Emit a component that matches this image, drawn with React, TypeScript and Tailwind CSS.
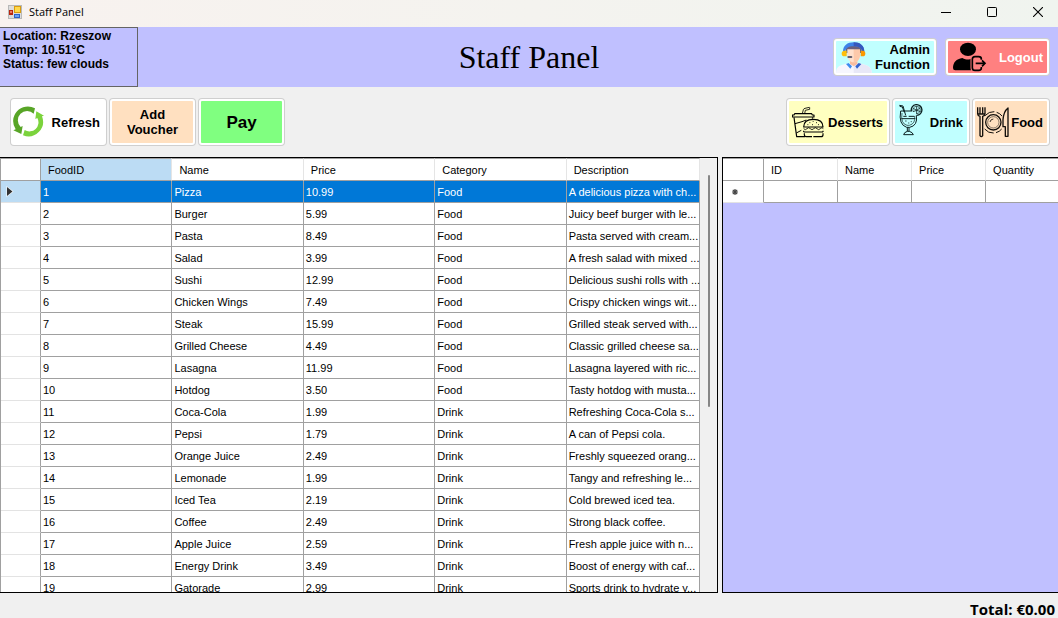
import React from "react";

const FOODS: [string, string, string, string][] = [
  ["Pizza", "10.99", "Food", "A delicious pizza with ch..."],
  ["Burger", "5.99", "Food", "Juicy beef burger with le..."],
  ["Pasta", "8.49", "Food", "Pasta served with cream..."],
  ["Salad", "3.99", "Food", "A fresh salad with mixed ..."],
  ["Sushi", "12.99", "Food", "Delicious sushi rolls with ..."],
  ["Chicken Wings", "7.49", "Food", "Crispy chicken wings wit..."],
  ["Steak", "15.99", "Food", "Grilled steak served with..."],
  ["Grilled Cheese", "4.49", "Food", "Classic grilled cheese sa..."],
  ["Lasagna", "11.99", "Food", "Lasagna layered with ric..."],
  ["Hotdog", "3.50", "Food", "Tasty hotdog with musta..."],
  ["Coca-Cola", "1.99", "Drink", "Refreshing Coca-Cola s..."],
  ["Pepsi", "1.79", "Drink", "A can of Pepsi cola."],
  ["Orange Juice", "2.49", "Drink", "Freshly squeezed orang..."],
  ["Lemonade", "1.99", "Drink", "Tangy and refreshing le..."],
  ["Iced Tea", "2.19", "Drink", "Cold brewed iced tea."],
  ["Coffee", "2.49", "Drink", "Strong black coffee."],
  ["Apple Juice", "2.59", "Drink", "Fresh apple juice with n..."],
  ["Energy Drink", "3.49", "Drink", "Boost of energy with caf..."],
  ["Gatorade", "2.99", "Drink", "Sports drink to hydrate y..."],
];

const FOOD_COLUMNS = ["FoodID", "Name", "Price", "Category", "Description"];
const ORDER_COLUMNS = ["ID", "Name", "Price", "Quantity"];

function AppIcon() {
  return (
    <svg className="h-[14px] w-[14px]" viewBox="0 0 14 14" aria-hidden="true">
      <rect width="14" height="14" fill="#b8b8b8" />
      <rect x="1" y="1" width="12" height="12" fill="#dcdcdc" />
      <rect x="1" y="5" width="4" height="5" fill="#b8260f" />
      <rect x="2" y="6" width="2" height="2" fill="#ef7a5e" />
      <rect x="6" y="1" width="7" height="7" fill="#d99b10" />
      <rect x="7" y="2" width="5" height="5" fill="#ffd84a" />
      <rect x="6" y="9" width="6" height="4" fill="#2d62c8" />
      <rect x="7" y="10" width="4" height="2" fill="#6aa2f4" />
    </svg>
  );
}

function RefreshIcon() {
  return (
    <svg className="h-8 w-8 shrink-0" viewBox="38 316 96 96" aria-hidden="true">
      <path d="M104 323 L100 339 A27 27 0 0 0 61 379 L67 376 L63 400 L39 389 L46 386 A44 44 0 0 1 104 323Z" fill="#58a527" />
      <path d="M68 404 L73 388 A27 27 0 0 0 111 352 L105 355 L108 332 L131 345 L125 347 A44 44 0 0 1 68 404Z" fill="#7bd33c" />
    </svg>
  );
}

function AdminIcon() {
  return (
    <svg className="h-8 w-9 shrink-0" viewBox="48 122 108 96" aria-hidden="true">
      <path d="M48 218 C48 202 55 197 68 193 L86 188 H116 L134 193 C148 197 155 204 155 218Z" fill="#f6f6fe" />
      <path d="M101 188 H116 L134 193 C148 197 155 204 155 218 H101Z" fill="#e8e8f7" />
      <path d="M90 174 H112 V191 L101 198 L90 191Z" fill="#f9bd9f" />
      <path d="M82 143 H120 V164 C120 177 112 186 101 186 S82 177 82 164Z" fill="#ffe0cc" />
      <path d="M101 143 H120 V164 C120 177 112 186 101 186Z" fill="#fdc9aa" />
      <path d="M77 150 C77 141 85 135 101 135 S125 141 125 150 V158 H120 V147 H82 V158 H77Z" fill="#6a5f7c" />
      <path d="M69 154 C69 136 82 126 101 126 S133 136 133 154 H126 C126 144 117 138 101 138 S76 144 76 154Z" fill="#3d82e8" />
      <path d="M101 126 C120 126 133 136 133 154 H126 C126 144 117 138 101 138Z" fill="#3658bd" />
      <path d="M80 151 H73 C67 151 65 155 65 160 S68 168 73 168 H80Z" fill="#ffbe0b" />
      <path d="M122 151 H129 C134 151 136 155 136 160 S133 168 129 168 H122Z" fill="#fb9900" />
      <rect x="82" y="167" width="15" height="6" rx="3" fill="#626070" />
      <path d="M86 188 L96 198 L91 205 L78 191Z" fill="#3c8cf0" />
      <path d="M116 188 L106 198 L111 205 L124 191Z" fill="#3262ce" />
    </svg>
  );
}

function LogoutIcon() {
  return (
    <svg className="h-[30px] w-[35px] shrink-0" viewBox="396 126 105 90" aria-hidden="true">
      <ellipse cx="444" cy="148" rx="24" ry="20" />
      <path d="M399 204 C399 187 409 177 427 174 C440 180 448 180 456 174 V211 H406 Q399 211 399 204Z" />
      <path d="M485 178 V177 Q485 170 476 170 H465 Q457 170 457 178 V203 Q457 211 465 211 H476 Q485 211 485 204 V202" fill="none" stroke="#ff8080" strokeWidth="11" />
      <path d="M484 179 V177 Q484 170 476 170 H465 Q457 170 457 178 V203 Q457 211 465 211 H476 Q484 211 484 204 V201" fill="none" stroke="#000" strokeWidth="5" />
      <path d="M467 190 H495 M486 181 L495 190 L486 199" fill="none" stroke="#000" strokeWidth="5" />
    </svg>
  );
}

function DessertsIcon() {
  return (
    <svg className="h-8 w-8 shrink-0" viewBox="36 47 96 96" fill="none" stroke="#000" strokeWidth="3.5" strokeLinejoin="round" aria-hidden="true">
      <path d="M37 80 V74 H42 L44 70 H95 L97 74 H102 V80Z" />
      <path d="M67 70 L70 58 Q71 55 75 54 L88 51 M74 70 L76 60 L89 57 V51" strokeWidth="2.5" />
      <path d="M42 81 L50 139 H76 M98 81 L97 85" />
      <path d="M45 100 L66 94 L79 89 M49 128 L64 120" strokeWidth="3" />
      <path d="M71 110 C71 95 82 87 100 87 S129 95 129 110Z" />
      <path d="M71 115 Q76 121 81 115 T91 115 T101 115 T111 115 T121 115 T130 115" strokeWidth="2.5" />
      <path d="M71 125 H129 M71 121 V125 M129 121 V125" />
      <path d="M73 129 V134 Q73 139 79 139 H96 M100 139 H123 Q129 139 129 133 V129" />
      <path d="M88 97 H91 M98 93 H101 M108 97 H111 M82 103 H85 M96 103 H99 M114 103 H117" strokeWidth="2.5" />
    </svg>
  );
}

function DrinkIcon() {
  return (
    <svg className="h-8 w-6 shrink-0" viewBox="356 42 72 96" fill="none" stroke="#0b2020" strokeWidth="3" strokeLinejoin="round" aria-hidden="true">
      <path d="M357 46 L368 48 L376 76 M358 49 L366 51 L372 67" />
      <path d="M396 63 H361 Q354 104 379 112 H388 Q413 107 408 76" />
      <path d="M365 69 Q360 101 380 106 H387 Q406 101 403 78" strokeWidth="2" />
      <path d="M363 86 H405 M369 79 H379 M385 79 H402" />
      <path d="M381 112 V124 M386 112 V124 M370 134 Q371 127 381 124 H387 Q397 127 399 134Z" />
      <path d="M393 63 A16 16 0 1 1 409 76" strokeWidth="4" />
      <path d="M398 62 A11 11 0 1 1 409 71" strokeWidth="2" />
      <path d="M409 61 V49 M409 61 L399 55 M409 61 L419 54 M409 61 L421 65 M409 61 V72 M409 61 L398 65" strokeWidth="2.5" />
      <path d="M374 93 H379 M391 95 H395 M383 99 H387" strokeWidth="2" />
    </svg>
  );
}

function FoodIcon() {
  return (
    <svg className="h-8 w-8 shrink-0" viewBox="590 50 96 96" fill="none" stroke="#14100c" strokeWidth="4" strokeLinejoin="round" aria-hidden="true">
      <path d="M592 54 V73 Q592 79 599 81 V139 Q603 145 607 139 V81 Q614 79 614 73 V54" />
      <path d="M599 54 V73 M607 54 V73 M592 74 H614" />
      <circle cx="639" cy="99" r="23" />
      <path d="M629 98 Q630 90 639 89" strokeWidth="2.5" />
      <path d="M614 79 Q626 66 642 67 M649 69 Q659 72 665 80 M613 119 Q624 132 640 131 M647 130 Q658 127 664 119" strokeWidth="3" />
      <circle cx="639" cy="99" r="17" strokeWidth="1.5" />
      <path d="M683 56 V141 H675 V112 H668 V91 Q670 66 683 56Z" />
    </svg>
  );
}

type PanelButtonProps = {
  className: string;
  icon?: React.ReactNode;
  children: React.ReactNode;
};

function PanelButton({ className, icon, children }: PanelButtonProps) {
  return (
    <button
      type="button"
      className={
        "flex items-center rounded-[3px] border-2 border-white text-[13px] leading-[15px] font-bold ring-1 ring-[#cfcfcf] " +
        className
      }
    >
      {icon}
      {children}
    </button>
  );
}

function WindowControls() {
  return (
    <div className="flex gap-[6px]">
      <button type="button" aria-label="Minimize" className="flex h-[23px] w-10 items-center justify-center">
        <svg className="h-[10px] w-[10px]" viewBox="0 0 10 10" aria-hidden="true"><path d="M0 5.5H10" stroke="#000" /></svg>
      </button>
      <button type="button" aria-label="Maximize" className="flex h-[23px] w-10 items-center justify-center">
        <svg className="h-[10px] w-[10px]" viewBox="0 0 10 10" aria-hidden="true"><rect x=".5" y=".5" width="9" height="9" rx=".8" fill="none" stroke="#000" /></svg>
      </button>
      <button type="button" aria-label="Close" className="flex h-[23px] w-10 items-center justify-center">
        <svg className="h-[10px] w-[10px]" viewBox="0 0 10 10" aria-hidden="true"><path d="M0 0L10 10M10 0L0 10" stroke="#000" strokeWidth="1.1" /></svg>
      </button>
    </div>
  );
}

function FoodTable() {
  return (
    <table className="w-full table-fixed border-separate border-spacing-0 border-l border-[#a0a0a0] bg-white text-[11px] leading-[14px]">
      <colgroup>
        <col className="w-10" />
        <col className="w-[18.8%]" />
        <col className="w-[18.8%]" />
        <col className="w-[18.8%]" />
        <col className="w-[18.8%]" />
        <col />
      </colgroup>
      <thead>
        <tr className="h-[23px] text-left">
          <td className="border-t border-r border-b border-[#a0a0a0]" />
          {FOOD_COLUMNS.map((name, i) => (
            <th
              key={name}
              scope="col"
              className={
                "border-t border-r border-b border-t-[#a0a0a0] border-r-[#e5e5e5] border-b-[#a0a0a0] py-0 pr-1 pl-[7px] font-normal " +
                (i === 0 ? "bg-[#bcdcf4]" : "")
              }
            >
              {name}
            </th>
          ))}
        </tr>
      </thead>
      <tbody>
        {FOODS.map((food, row) => (
          <tr key={food[0]} className={row === 0 ? "h-[22px] bg-[#0078d7] text-white" : "h-[22px]"}>
            <td
              className={
                "border-r border-b border-r-[#a0a0a0] border-b-[#e3e3e3] py-0 pr-0 pl-[5px] " +
                (row === 0 ? "bg-[#bcdcf4]" : "")
              }
            >
              {row === 0 && (
                <svg className="h-[11px] w-[8px]" viewBox="0 0 8 11" aria-hidden="true">
                  <path d="M.5 0L7.5 5.5L.5 11Z" fill="#fff" />
                  <path d="M1 1L6.5 5.5L1 10Z" fill="#333" />
                </svg>
              )}
            </td>
            {[String(row + 1), ...food].map((value, i) => (
              <td key={i} className="border-r border-b border-[#a0a0a0] py-0 pr-0 pl-[2px] whitespace-nowrap">
                {value}
              </td>
            ))}
          </tr>
        ))}
      </tbody>
    </table>
  );
}

function OrderTable() {
  return (
    <table className="w-full table-fixed border-separate border-spacing-0 bg-white text-[11px] leading-[14px]">
      <colgroup>
        <col className="w-[41px]" />
        <col className="w-[22.1%]" />
        <col className="w-[22.1%]" />
        <col className="w-[22.1%]" />
        <col />
      </colgroup>
      <thead>
        <tr className="h-[23px] text-left">
          <td className="border-t border-r border-b border-[#a0a0a0]" />
          {ORDER_COLUMNS.map((name) => (
            <th
              key={name}
              scope="col"
              className="border-t border-r border-b border-t-[#a0a0a0] border-r-[#e5e5e5] border-b-[#a0a0a0] py-0 pr-1 pl-[7px] font-normal last:border-r-0"
            >
              {name}
            </th>
          ))}
        </tr>
      </thead>
      <tbody>
        <tr className="h-[22px]">
          <td className="border-r border-b border-r-[#a0a0a0] border-b-[#e3e3e3] py-0 pr-0 pl-[9px]">
            <svg className="h-[6px] w-[6px]" viewBox="0 0 6 6" aria-hidden="true">
              <path d="M3 0V6M0 3H6M.8 .8L5.2 5.2M5.2 .8L.8 5.2" stroke="#444" strokeWidth="1.2" />
            </svg>
          </td>
          {ORDER_COLUMNS.map((name) => (
            <td key={name} className="border-r border-b border-[#a0a0a0] p-0 last:border-r-0" />
          ))}
        </tr>
      </tbody>
    </table>
  );
}

export default function App() {
  return (
    <div className="flex h-screen flex-col bg-[#f0f0f0] font-['Liberation_Sans',Arial,sans-serif] text-black">
      <div className="flex h-[27px] shrink-0 items-start justify-between bg-linear-to-r from-[#f8f2ef] to-[#f0f4ef] pl-2">
        <div className="flex h-6 items-center gap-[7px] font-['Open_Sans','Noto_Sans',sans-serif] text-[11px]">
          <AppIcon />
          <span>Staff Panel</span>
        </div>
        <WindowControls />
      </div>

      <header className="grid h-[60px] shrink-0 grid-cols-[1fr_auto_1fr] items-center bg-[#c0c0ff]">
        <p className="h-full w-[138px] border border-l-0 border-[#646464] pt-px pl-[3px] text-[12px] leading-[14px] font-bold">
          Location: Rzeszow
          <br />
          Temp: 10.51°C
          <br />
          Status: few clouds
        </p>
        <h1 className="font-['Liberation_Serif',serif] text-[32px] leading-10">Staff Panel</h1>
        <div className="flex justify-end gap-[10px] pr-[9px]">
          <PanelButton className="h-9 w-[102px] justify-between bg-[#c0ffff] pr-1 text-right" icon={<AdminIcon />}>
            <span>
              Admin
              <br />
              Function
            </span>
          </PanelButton>
          <PanelButton className="h-9 w-[103px] justify-between bg-[#ff8080] pr-1 pl-1 text-white" icon={<LogoutIcon />}>
            <span>Logout</span>
          </PanelButton>
        </div>
      </header>

      <nav className="flex shrink-0 justify-between py-3 pr-[9px] pl-[11px]">
        <div className="flex gap-1">
          <PanelButton className="h-[46px] w-[95px] justify-between bg-white pr-1" icon={<RefreshIcon />}>
            <span>Refresh</span>
          </PanelButton>
          <PanelButton className="h-[46px] w-[85px] justify-center bg-[#ffe0c0]">
            <span>
              Add
              <br />
              Voucher
            </span>
          </PanelButton>
          <PanelButton className="h-[46px] w-[85px] justify-center bg-[#80ff80]">
            <span className="text-[17px]">Pay</span>
          </PanelButton>
        </div>
        <div className="flex gap-1">
          <PanelButton className="h-[46px] w-[102px] justify-between bg-[#ffffc0] pr-1 pl-[3px]" icon={<DessertsIcon />}>
            <span>Desserts</span>
          </PanelButton>
          <PanelButton className="h-[46px] w-[76px] justify-between bg-[#c0ffff] pr-1 pb-1 pl-1" icon={<DrinkIcon />}>
            <span className="pt-1">Drink</span>
          </PanelButton>
          <PanelButton className="h-[46px] w-[76px] justify-between bg-[#ffe0c0] pr-1 pl-[2px]" icon={<FoodIcon />}>
            <span>Food</span>
          </PanelButton>
        </div>
      </nav>

      <main className="grid min-h-0 flex-1 grid-cols-[718fr_336fr] grid-rows-[minmax(0,1fr)] gap-1">
        <section aria-label="Menu items" className="flex min-w-0 border border-l-0 border-black">
          <div className="min-w-0 flex-1 overflow-y-auto [scrollbar-width:none]">
            <FoodTable />
          </div>
          <div className="flex w-[17px] shrink-0 justify-center py-[17px]">
            <div className="h-[58%] w-[2px] rounded-full bg-[#868686]" />
          </div>
        </section>
        <section aria-label="Order" className="min-w-0 border border-r-0 border-black bg-[#c0c0ff]">
          <OrderTable />
        </section>
      </main>

      <footer className="flex h-[25px] shrink-0 items-end justify-end pr-[3px] font-['Open_Sans','Noto_Sans',sans-serif] text-[15px] leading-[18px] font-bold">
        Total: €0.00
      </footer>
    </div>
  );
}
